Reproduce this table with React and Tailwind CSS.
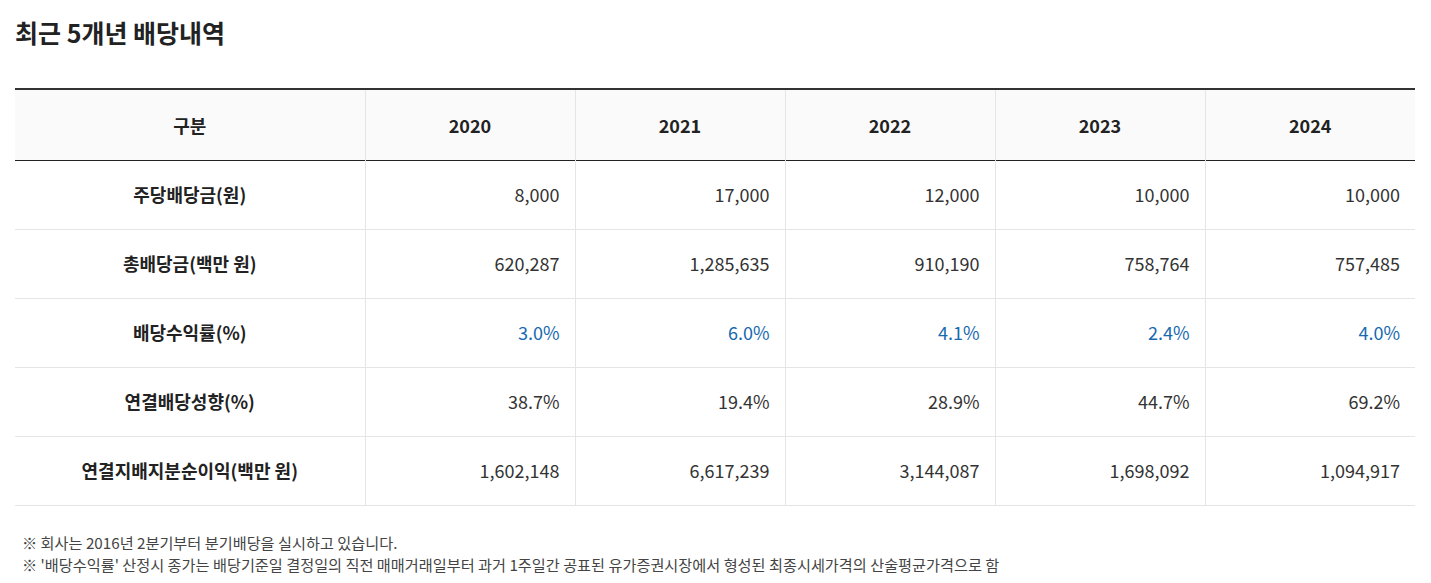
const YEARS = ['2020', '2021', '2022', '2023', '2024'];

const ROWS = [
  { label: '주당배당금(원)', values: ['8,000', '17,000', '12,000', '10,000', '10,000'] },
  { label: '총배당금(백만 원)', values: ['620,287', '1,285,635', '910,190', '758,764', '757,485'] },
  { label: '배당수익률(%)', values: ['3.0%', '6.0%', '4.1%', '2.4%', '4.0%'], blue: true },
  { label: '연결배당성향(%)', values: ['38.7%', '19.4%', '28.9%', '44.7%', '69.2%'] },
  { label: '연결지배지분순이익(백만 원)', values: ['1,602,148', '6,617,239', '3,144,087', '1,698,092', '1,094,917'] },
];

export default function App() {
  return (
    <div
      className="bg-white px-[15px] text-[#222]"
      style={{ fontFamily: '"Noto Sans CJK KR", "Noto Sans", sans-serif' }}
    >
      <h2 className="pt-[14px] text-[25px] font-bold leading-[36px] text-[#222]">
        최근 5개년 배당내역
      </h2>

      <table className="mt-[38px] w-[1400px] table-fixed border-collapse text-[18px]">
        <colgroup>
          <col className="w-[350px]" />
          {YEARS.map((y) => (
            <col key={y} className="w-[210px]" />
          ))}
        </colgroup>
        <thead>
          <tr className="h-[71px] border-t-2 border-b border-t-[#333] border-b-[#222] bg-[#fafafa]">
            <th className="pt-[2px] font-bold">구분</th>
            {YEARS.map((y) => (
              <th key={y} className="border-l border-[#e5e5e5] pt-[2px] font-bold">
                {y}
              </th>
            ))}
          </tr>
        </thead>
        <tbody>
          {ROWS.map((row) => (
            <tr key={row.label} className="h-[69px] border-b border-[#e5e5e5]">
              <td className="text-center font-bold">{row.label}</td>
              {row.values.map((v, i) => (
                <td
                  key={i}
                  className={`border-l border-[#e5e5e5] pr-[15px] text-right ${row.blue ? 'text-[#1769b0]' : 'text-[#333]'}`}
                >
                  {v}
                </td>
              ))}
            </tr>
          ))}
        </tbody>
      </table>

      <div className="mt-[25px] pl-[7px] text-[15.2px] leading-[22px] text-[#444]">
        <p>※ 회사는 2016년 2분기부터 분기배당을 실시하고 있습니다.</p>
        <p>
          ※ '배당수익률' 산정시 종가는 배당기준일 결정일의 직전 매매거래일부터 과거 1주일간 공표된 유가증권시장에서 형성된
          최종시세가격의 산술평균가격으로 함
        </p>
      </div>
    </div>
  );
}
